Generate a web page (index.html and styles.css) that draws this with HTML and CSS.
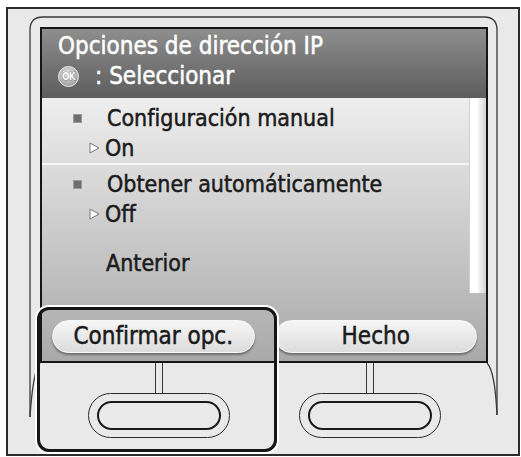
FILE: index.html
```html
<!DOCTYPE html>
<html lang="es">
<head>
<meta charset="utf-8">
<title>Opciones de dirección IP</title>
<link rel="stylesheet" href="styles.css">
</head>
<body>
<div class="device">
  <svg class="bezel" width="512" height="447" viewBox="0 0 512 447" aria-hidden="true">
    <path d="M22 408 L22 21 Q22 8 35 8 L476 8 Q489 8 489 21 L489 406" fill="none" stroke="#3a3a3a" stroke-width="1.3"/>
    <path d="M32 354 Q25 362 22 408" fill="none" stroke="#3a3a3a" stroke-width="1.3"/>
    <path d="M479 354 Q487 362 489 406" fill="none" stroke="#3a3a3a" stroke-width="1.3"/>
  </svg>
  <div class="screen">
    <div class="header">
      <div class="title">Opciones de dirección IP</div>
      <div class="hint"><span class="ok">OK</span><span class="hint-text">: Seleccionar</span></div>
    </div>
    <div class="body">
      <div class="list">
        <div class="item">
          <div class="row"><span class="bullet"></span><span class="label">Configuración manual</span></div>
          <div class="row sub"><svg class="tri" width="11" height="12" viewBox="0 0 11 12"><polygon points="1,1 10,6 1,11" fill="#fff" stroke="#777" stroke-width="1"/></svg><span>On</span></div>
        </div>
        <div class="item second">
          <div class="row"><span class="bullet"></span><span class="label">Obtener automáticamente</span></div>
          <div class="row sub"><svg class="tri" width="11" height="12" viewBox="0 0 11 12"><polygon points="1,1 10,6 1,11" fill="#fff" stroke="#777" stroke-width="1"/></svg><span>Off</span></div>
        </div>
        <div class="row back"><span class="label">Anterior</span></div>
      </div>
      <div class="scroll"></div>
    </div>
    <div class="bar">
      <div class="pill">Confirmar opc.</div>
      <div class="pill">Hecho</div>
    </div>
  </div>
  <div class="keys">
    <div class="key">
      <div class="stem"></div>
      <div class="oval"><div class="oval-in"></div></div>
    </div>
    <div class="key">
      <div class="stem"></div>
      <div class="oval"><div class="oval-in"></div></div>
    </div>
  </div>
  <div class="focus"></div>
</div>
</body>
</html>
```
FILE: styles.css
```css
html, body {
  margin: 0;
  padding: 0;
  background: #ffffff;
}
body {
  font-family: "DejaVu Sans Condensed", "DejaVu Sans", sans-serif;
  font-stretch: condensed;
}
.device {
  position: relative;
  margin: 7px 0 0 6px;
  width: 510px;
  height: 445px;
  border: 2px solid #2c2c2c;
  background: #e9e9e9;
}
.bezel {
  position: absolute;
  left: 0;
  top: 0;
}
.screen {
  position: relative;
  margin: 18px 0 0 32px;
  width: 444px;
  border: 2px solid #161616;
  background: linear-gradient(#f0f0f0 60px, #a9a9a9);
}
.header {
  height: 69px;
  box-sizing: border-box;
  padding: 2px 0 0 16px;
  background: linear-gradient(#8e8e8e, #5d5d5d);
  color: #ffffff;
  font-size: 24px;
  -webkit-text-stroke: 0.5px #ffffff;
}
.title {
  height: 30px;
  line-height: 30px;
  white-space: nowrap;
}
.hint {
  display: flex;
  align-items: center;
  height: 30px;
  line-height: 30px;
}
.ok {
  width: 19px;
  height: 19px;
  border-radius: 50%;
  background: radial-gradient(circle at 45% 35%, #e4e4e4, #8c8c8c);
  border: 1px solid #efefef;
  color: #ffffff;
  -webkit-text-stroke: 0.6px #4a4a4a;
  paint-order: stroke fill;
  font-family: "DejaVu Sans", sans-serif;
  font-weight: bold;
  font-size: 10px;
  line-height: 19px;
  text-align: center;
  letter-spacing: -0.8px;
}
.hint-text {
  margin-left: 16px;
}
.body {
  display: flex;
  height: 195px;
}
.list {
  flex: 1;
  padding-top: 5px;
  color: #1b1b1b;
  font-size: 23px;
  -webkit-text-stroke: 0.5px #1b1b1b;
}
.row {
  display: flex;
  align-items: center;
  height: 30px;
  line-height: 30px;
  white-space: nowrap;
}
.bullet {
  width: 7px;
  height: 7px;
  margin-left: 31px;
  margin-right: 25px;
  background: #6f6f6f;
  border: 1px solid #9a9a9a;
}
.sub {
  padding-left: 47px;
}
.tri {
  margin-right: 5px;
}
.item.second {
  border-top: 2px solid #f7f7f7;
  padding-top: 4px;
}
.back {
  margin-top: 19px;
  padding-left: 64px;
}
.scroll {
  width: 17px;
  background: linear-gradient(90deg, #ffffff 40%, #d4d4d4);
  border-left: 1px solid #cfcfcf;
  box-sizing: border-box;
}
.bar {
  display: flex;
  gap: 20px;
  height: 68px;
  box-sizing: border-box;
  padding: 27px 9px 0 10px;
}
.pill {
  flex: 1;
  height: 33px;
  box-sizing: border-box;
  border-radius: 17px;
  background: linear-gradient(#f6f6f6, #dcdcdc);
  border: 1px solid #f8f8f8;
  box-shadow: 0 2px 2px rgba(0, 0, 0, 0.35);
  color: #1b1b1b;
  font-size: 24px;
  line-height: 31px;
  text-align: center;
  white-space: nowrap;
  -webkit-text-stroke: 0.5px #1b1b1b;
}
.keys {
  display: flex;
  gap: 69px;
  padding-left: 80px;
}
.key {
  width: 142px;
  display: flex;
  flex-direction: column;
  align-items: center;
}
.stem {
  width: 6px;
  height: 30px;
  border-left: 1.5px solid #3a3a3a;
  border-right: 1.5px solid #3a3a3a;
}
.oval {
  width: 142px;
  height: 45px;
  box-sizing: border-box;
  border: 1px solid #2a2a2a;
  border-radius: 23px;
  display: flex;
  align-items: center;
  justify-content: center;
}
.oval-in {
  width: 124px;
  height: 29px;
  box-sizing: border-box;
  border: 2.5px solid #1a1a1a;
  border-radius: 15px;
}
.focus {
  position: absolute;
  left: 29px;
  top: 298px;
  width: 240px;
  height: 145px;
  box-sizing: border-box;
  border: 3px solid #161616;
  border-radius: 12px;
  box-shadow: 0 0 0 2px #ffffff;
}
```
